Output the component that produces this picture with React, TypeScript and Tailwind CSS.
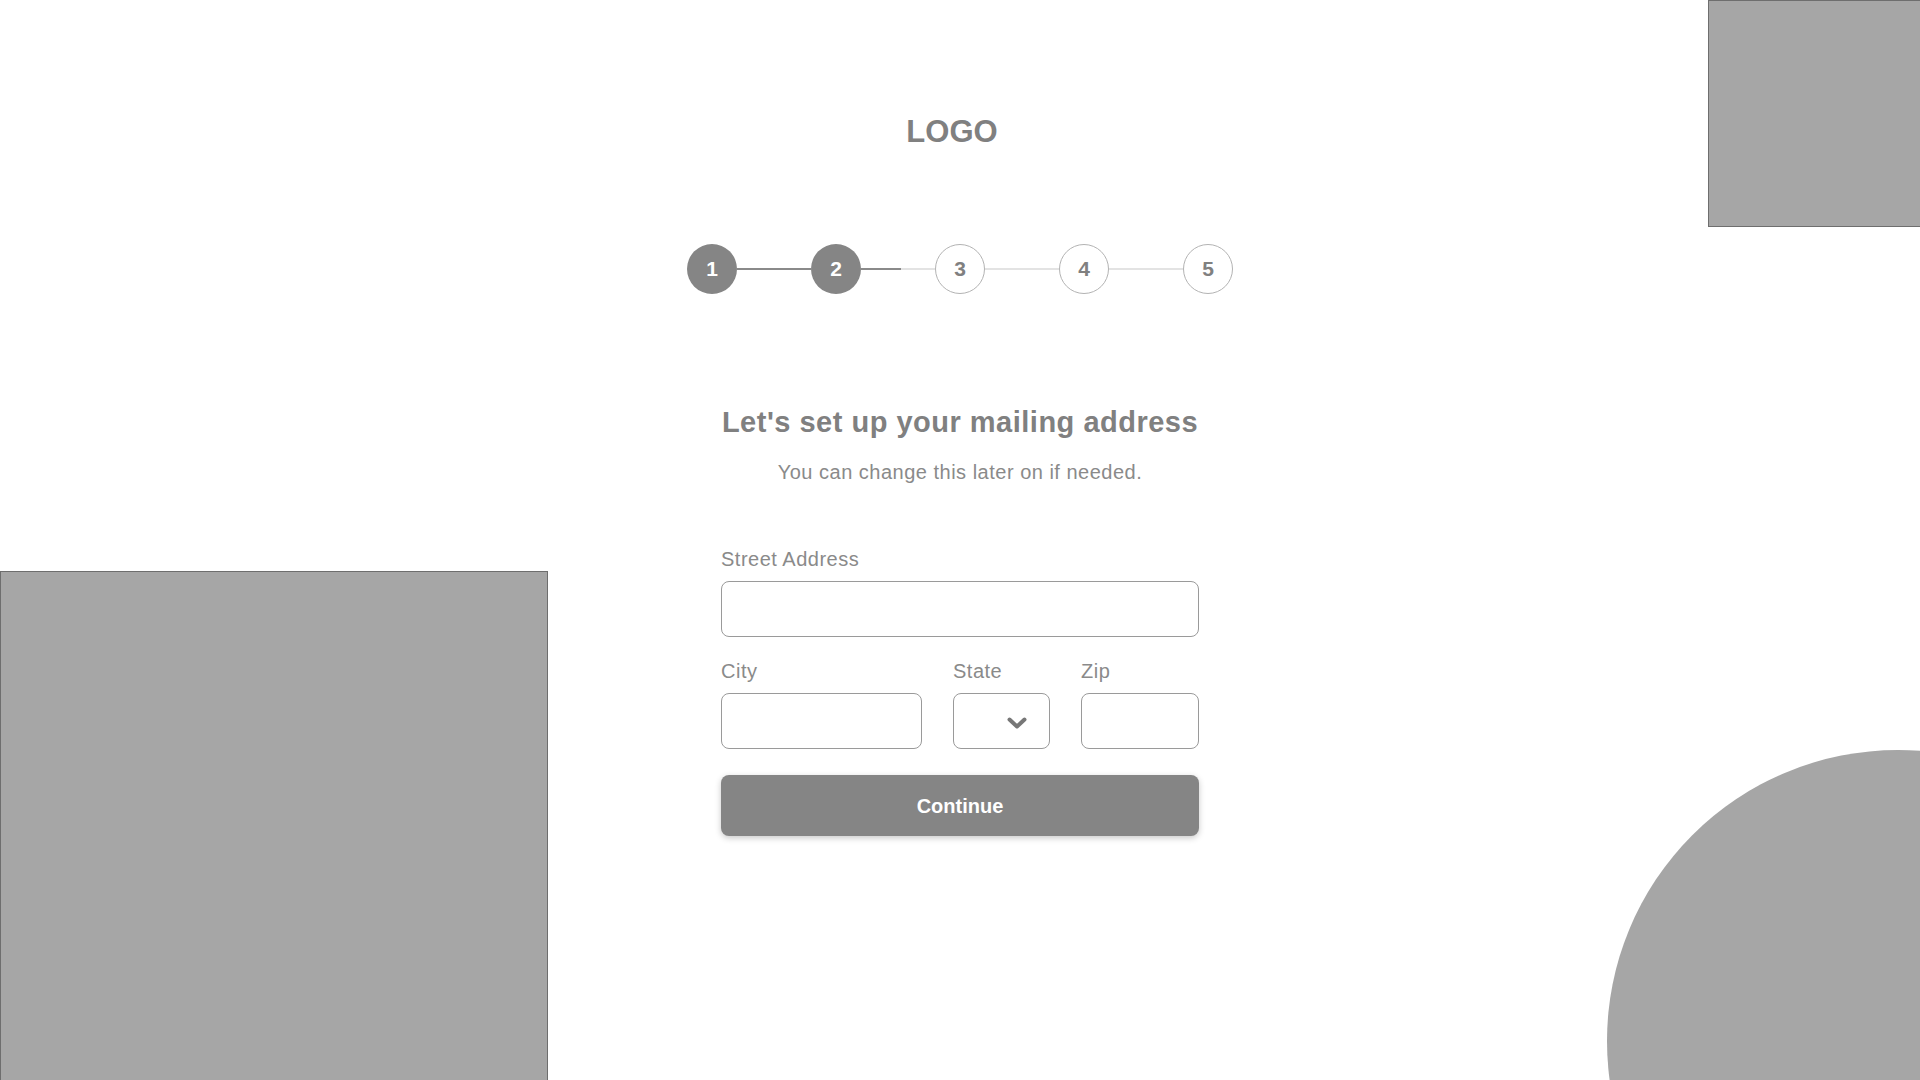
import React from "react";

const font = { fontFamily: '"Liberation Sans", Arial, sans-serif' };

function Step({ n, active }: { n: number; active: boolean }) {
  return active ? (
    <div className="flex h-[50px] w-[50px] shrink-0 items-center justify-center rounded-full bg-[#858585] pb-[1px] text-[21px] font-bold leading-none text-white">
      {n}
    </div>
  ) : (
    <div className="flex h-[50px] w-[50px] shrink-0 items-center justify-center rounded-full border border-[#b3b3b3] bg-white pb-[1px] text-[21px] font-bold leading-none text-[#808080]">
      {n}
    </div>
  );
}

function Connector({ fill }: { fill: "full" | "partial" | "none" }) {
  return (
    <div className="flex h-[2px] w-[74px] shrink-0">
      {fill === "full" && <div className="h-full w-full bg-[#8a8a8a]" />}
      {fill === "partial" && (
        <>
          <div className="h-full w-[40px] bg-[#8a8a8a]" />
          <div className="h-full flex-1 bg-[#e3e3e3]" />
        </>
      )}
      {fill === "none" && <div className="h-full w-full bg-[#e3e3e3]" />}
    </div>
  );
}

function Label({ children }: { children: React.ReactNode }) {
  return (
    <div className="mb-[12px] text-[20px] leading-[20px] tracking-[0.5px] text-[#8a8a8a]">
      {children}
    </div>
  );
}

export default function App() {
  return (
    <div className="relative h-[1080px] w-full overflow-hidden bg-white" style={font}>
      {/* decorative shapes */}
      <div className="absolute left-[1708px] top-0 h-[227px] w-[240px] border border-[#6e6e6e] bg-[#a6a6a6]" />
      <div className="absolute left-0 top-[571px] h-[540px] w-[548px] border border-[#6e6e6e] bg-[#a6a6a6]" />
      <div className="absolute left-[1607px] top-[750px] h-[582px] w-[582px] rounded-full bg-[#a6a6a6]" />

      <div className="relative flex flex-col items-center pt-[116px]">
        <div className="mr-[16px] text-[31px] font-bold leading-[31px] text-[#808080]">LOGO</div>

        <div className="mt-[97px] flex items-center">
          <Step n={1} active />
          <Connector fill="full" />
          <Step n={2} active />
          <Connector fill="partial" />
          <Step n={3} active={false} />
          <Connector fill="none" />
          <Step n={4} active={false} />
          <Connector fill="none" />
          <Step n={5} active={false} />
        </div>

        <h1 className="mt-[114px] text-[29px] font-bold leading-[29px] tracking-[0.5px] text-[#808080]">
          Let's set up your mailing address
        </h1>
        <p className="mt-[25px] text-[20px] leading-[20px] tracking-[0.5px] text-[#8a8a8a]">
          You can change this later on if needed.
        </p>

        <form className="mt-[67px] flex w-[478px] flex-col" onSubmit={(e) => e.preventDefault()}>
          <Label>Street Address</Label>
          <input
            type="text"
            className="h-[56px] w-full rounded-[8px] border border-[#9a9a9a] bg-white px-3 text-[18px] text-[#555] outline-none"
          />

          <div className="mt-[24px] flex gap-[31px]">
            <div className="flex w-[201px] flex-col">
              <Label>City</Label>
              <input
                type="text"
                className="h-[56px] w-full rounded-[8px] border border-[#9a9a9a] bg-white px-3 text-[18px] text-[#555] outline-none"
              />
            </div>
            <div className="flex w-[97px] flex-col">
              <Label>State</Label>
              <div className="flex h-[56px] w-full items-center justify-end rounded-[8px] border border-[#9a9a9a] bg-white pr-[22px] pt-[3px]">
                <svg width="20" height="12" viewBox="0 0 20 12" fill="none">
                  <path
                    d="M2.5 2.5 L10 9.5 L17.5 2.5"
                    stroke="#777777"
                    strokeWidth="4"
                    strokeLinecap="round"
                    strokeLinejoin="round"
                  />
                </svg>
              </div>
            </div>
            <div className="flex flex-1 flex-col">
              <Label>Zip</Label>
              <input
                type="text"
                className="h-[56px] w-full rounded-[8px] border border-[#9a9a9a] bg-white px-3 text-[18px] text-[#555] outline-none"
              />
            </div>
          </div>

          <button
            type="submit"
            className="mt-[26px] flex h-[61px] w-full items-center justify-center rounded-[8px] bg-[#858585] text-[20px] font-bold text-white shadow-[0_2px_6px_rgba(0,0,0,0.22)]"
          >
            Continue
          </button>
        </form>
      </div>
    </div>
  );
}
